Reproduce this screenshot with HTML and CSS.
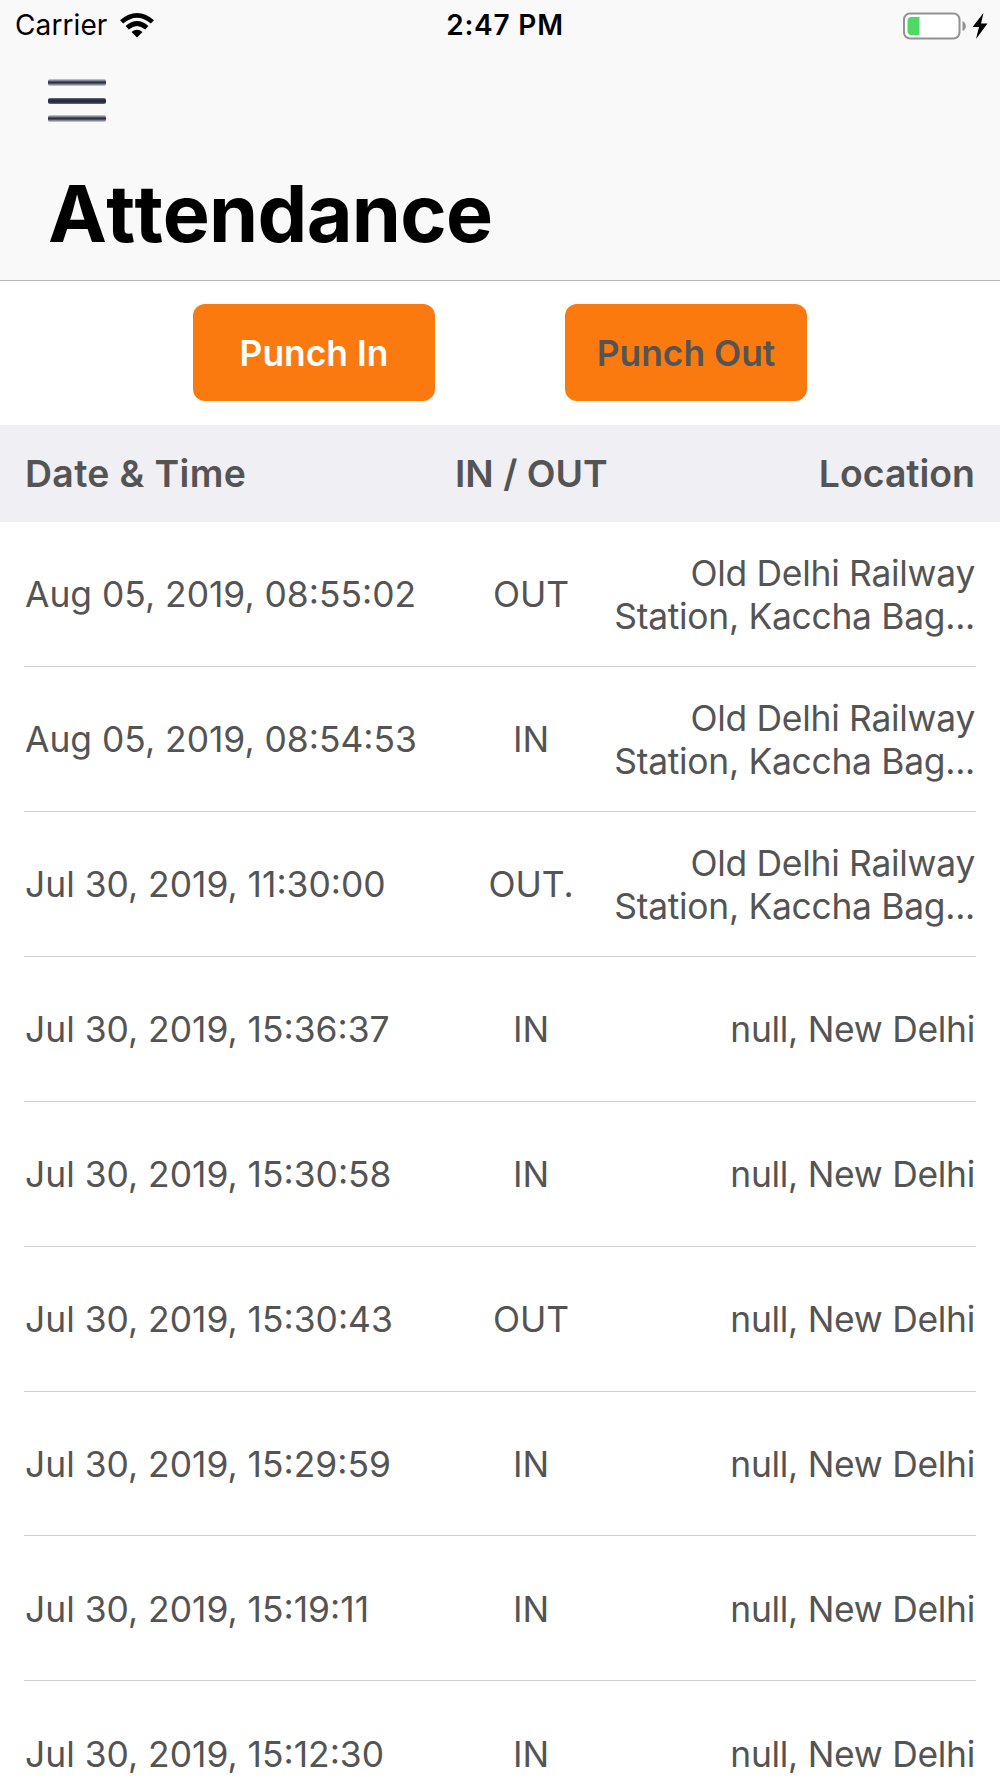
FILE: index.html
```html
<!DOCTYPE html>
<html lang="en">
<head>
    <meta charset="UTF-8">
    <meta name="viewport" content="width=device-width, initial-scale=1.0">
    <title>Attendance</title>
    <link rel="stylesheet" href="styles.css">
</head>
<body>

    <!-- Status bar and page title -->
    <header class="header">
        <div class="status-bar">
            <div class="status-left">
                <span class="carrier">Carrier</span>
                <svg class="wifi" width="34" height="25" viewBox="0 0 34 25">
                    <path d="M0 7.2 Q17 -7.2 34 7.2 L30.8 10.6 Q17 -1.2 3.2 10.6 Z"/>
                    <path d="M5.6 13 Q17 3 28.4 13 L25.2 16.4 Q17 9.4 8.8 16.4 Z"/>
                    <path d="M11.5 19 Q17 14.4 22.5 19 L17 24.6 Z"/>
                </svg>
            </div>
            <span class="time">2:47 PM</span>
            <div class="status-right">
                <svg width="86" height="28" viewBox="0 0 86 28">
                    <rect x="1" y="1.5" width="55.5" height="25" rx="6" fill="#fff" stroke="#929292" stroke-width="2"/>
                    <path d="M16.5 5 V23 H8.5 Q4.5 23 4.5 19 V9 Q4.5 5 8.5 5 Z" fill="#4cd964"/>
                    <path d="M59.5 9 Q62.8 10.5 62.8 14 T59.5 19 Z" fill="#929292"/>
                    <path d="M80.5 1 L69.5 15 H76 L73 27 L84.5 11.5 H78 Z"/>
                </svg>
            </div>
        </div>
        <button class="menu-button" aria-label="Menu">
            <span></span>
            <span></span>
            <span></span>
        </button>
        <h1>Attendance</h1>
    </header>

    <!-- Punch buttons -->
    <div class="punch-buttons">
        <button class="punch-button">Punch In</button>
        <button class="punch-button punch-out">Punch Out</button>
    </div>

    <!-- Attendance list -->
    <div class="list-header">
        <span class="date">Date &amp; Time</span>
        <span class="type">IN / OUT</span>
        <span class="location">Location</span>
    </div>
    <div class="list">
        <div class="row">
            <span class="date">Aug 05, 2019, 08:55:02</span>
            <span class="type">OUT</span>
            <span class="location">Old Delhi Railway<br>Station, Kaccha Bag...</span>
        </div>
        <div class="row">
            <span class="date">Aug 05, 2019, 08:54:53</span>
            <span class="type">IN</span>
            <span class="location">Old Delhi Railway<br>Station, Kaccha Bag...</span>
        </div>
        <div class="row">
            <span class="date">Jul 30, 2019, 11:30:00</span>
            <span class="type">OUT.</span>
            <span class="location">Old Delhi Railway<br>Station, Kaccha Bag...</span>
        </div>
        <div class="row">
            <span class="date">Jul 30, 2019, 15:36:37</span>
            <span class="type">IN</span>
            <span class="location">null, New Delhi</span>
        </div>
        <div class="row">
            <span class="date">Jul 30, 2019, 15:30:58</span>
            <span class="type">IN</span>
            <span class="location">null, New Delhi</span>
        </div>
        <div class="row">
            <span class="date">Jul 30, 2019, 15:30:43</span>
            <span class="type">OUT</span>
            <span class="location">null, New Delhi</span>
        </div>
        <div class="row">
            <span class="date">Jul 30, 2019, 15:29:59</span>
            <span class="type">IN</span>
            <span class="location">null, New Delhi</span>
        </div>
        <div class="row">
            <span class="date">Jul 30, 2019, 15:19:11</span>
            <span class="type">IN</span>
            <span class="location">null, New Delhi</span>
        </div>
        <div class="row">
            <span class="date">Jul 30, 2019, 15:12:30</span>
            <span class="type">IN</span>
            <span class="location">null, New Delhi</span>
        </div>
    </div>

</body>
</html>
```
FILE: styles.css
```css
/* General Styles */
* {
    box-sizing: border-box;
}

body {
    font-family: Inter, "Liberation Sans", sans-serif;
    background-color: #fff;
    color: #545454;
    height: 1778px;
    margin: 0;
    overflow: hidden;
}

/* Header Section */
.header {
    background-color: #f9f9f9;
    color: #000;
    height: 281px;
    border-bottom: 1px solid #b9b9b9;
}

.status-bar {
    display: grid;
    grid-template-columns: 1fr auto 1fr;
    align-items: center;
    height: 50px;
    padding: 0 11px 0 15px;
    font-size: 28px;
    line-height: 51px;
}

.status-left {
    display: flex;
    align-items: center;
    gap: 13px;
}

.carrier {
    letter-spacing: 0.1px;
}

.status-right {
    display: flex;
    justify-content: flex-end;
}

.time {
    font-weight: 600;
    letter-spacing: 0.8px;
    padding-left: 6px;
}

/* Menu icon */
.menu-button {
    display: flex;
    flex-direction: column;
    justify-content: space-between;
    width: 58px;
    height: 43px;
    margin: 29px 0 0 48px;
    padding: 0;
    background: none;
    border: none;
}

.menu-button span {
    height: 7px;
    background: linear-gradient(#d5d6da, #2c3047 45%, #2c3047 55%, #d5d6da);
    border-radius: 2px;
}

.menu-button span:nth-child(2) {
    height: 6px;
    background: linear-gradient(#6f7282, #262b42 30%, #262b42 70%, #6f7282);
}

h1 {
    margin: 44px 0 0 48px;
    font-size: 79px;
    font-weight: 700;
    font-kerning: none;
    letter-spacing: -0.7px;
    line-height: 94px;
}

/* Punch Buttons */
.punch-buttons {
    display: flex;
    justify-content: center;
    gap: 130px;
    height: 144px;
    padding-top: 23px;
}

.punch-button {
    width: 242px;
    height: 97px;
    padding: 2px 0 0;
    background-color: #fb7a10;
    color: #fff;
    border: none;
    border-radius: 12px;
    font-family: inherit;
    font-size: 35.4px;
    font-weight: 600;
}

.punch-out {
    color: #545454;
}

/* Attendance List */
.list-header,
.row {
    display: grid;
    grid-template-columns: 430px 152px 1fr;
    align-items: center;
    white-space: nowrap;
}

.list-header {
    height: 97px;
    padding: 0 25px;
    background-color: #efeff4;
    font-size: 37.4px;
    font-weight: 600;
}

.list-header .date {
    letter-spacing: 0.35px;
}

.row {
    height: 144.93px;
    margin: 0 24px;
    padding: 2px 1px 0 1px;
    border-bottom: 1px solid #d0d0d0;
    font-size: 35.4px;
    line-height: 43px;
}

.type {
    text-align: center;
}

.location {
    text-align: right;
}

.row .location {
    letter-spacing: -0.28px;
}
```
